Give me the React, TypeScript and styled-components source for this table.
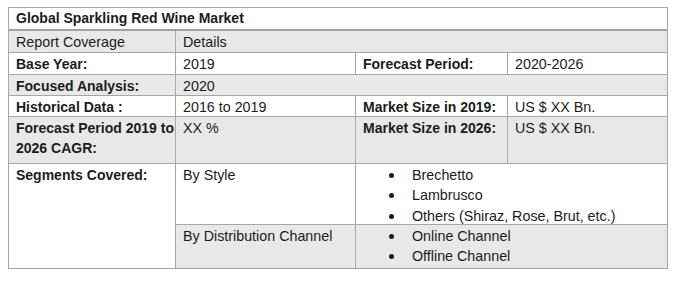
import React from "react";
import styled, { createGlobalStyle } from "styled-components";

const Global = createGlobalStyle`
  html, body { margin: 0; padding: 0; background: #ffffff; }
  body { font-family: "Liberation Sans", Arial, sans-serif; }
`;

const Page = styled.div`
  padding: 7px 0 0 8px;
`;

const Table = styled.div`
  width: 660px;
  box-sizing: border-box;
  border: 1px solid #a6a6a6;
  color: #1c1c1c;
  font-size: 14.3px;
`;

const Title = styled.div`
  height: 21px;
  line-height: 21px;
  padding: 0 7px;
  font-size: 14px;
  font-weight: bold;
  background: #ffffff;
  border-bottom: 2px solid #a0a0a0;
`;

const Grid = styled.div`
  display: grid;
  grid-template-columns: 166px 179px 151px 159px;
  grid-template-rows: 21px 21px 20px 20px 46px 60px 43px;
  gap: 1px;
  background: #a6a6a6;
`;

const Cell = styled.div<{ $grey?: boolean; $bold?: boolean; $span?: number; $rows?: number }>`
  background: ${(p) => (p.$grey ? "#e8e8e8" : "#ffffff")};
  font-weight: ${(p) => (p.$bold ? "bold" : "normal")};
  font-size: ${(p) => (p.$bold ? "14px" : "14.3px")};
  grid-column: span ${(p) => p.$span ?? 1};
  grid-row: span ${(p) => p.$rows ?? 1};
  padding: 0.5px 7px 0;
  line-height: 20.5px;
  white-space: nowrap;
`;

const Bullets = styled.ul`
  list-style: none;
  margin: 0;
  padding: 0 0 0 49px;
`;

const Bullet = styled.li`
  position: relative;
  line-height: 20.5px;
  &::before {
    content: "";
    position: absolute;
    left: -23px;
    top: 8px;
    width: 5px;
    height: 5px;
    border-radius: 50%;
    background: #1c1c1c;
  }
`;

export default function App() {
  return (
    <Page>
      <Global />
      <Table>
        <Title>Global Sparkling Red Wine Market</Title>
        <Grid>
          <Cell $grey>Report Coverage</Cell>
          <Cell $grey $span={3}>Details</Cell>

          <Cell $bold>Base Year:</Cell>
          <Cell>2019</Cell>
          <Cell $bold>Forecast Period:</Cell>
          <Cell>2020-2026</Cell>

          <Cell $grey $bold>Focused Analysis:</Cell>
          <Cell $grey $span={3}>2020</Cell>

          <Cell $bold>Historical Data :</Cell>
          <Cell>2016 to 2019</Cell>
          <Cell $bold>Market Size in 2019:</Cell>
          <Cell>US $ XX Bn.</Cell>

          <Cell $grey $bold>
            Forecast Period 2019 to
            <br />
            2026 CAGR:
          </Cell>
          <Cell $grey>XX %</Cell>
          <Cell $grey $bold>Market Size in 2026:</Cell>
          <Cell $grey>US $ XX Bn.</Cell>

          <Cell $bold $rows={2}>Segments Covered:</Cell>
          <Cell>By Style</Cell>
          <Cell $span={2}>
            <Bullets>
              <Bullet>Brechetto</Bullet>
              <Bullet>Lambrusco</Bullet>
              <Bullet>Others (Shiraz, Rose, Brut, etc.)</Bullet>
            </Bullets>
          </Cell>

          <Cell $grey>By Distribution Channel</Cell>
          <Cell $grey $span={2}>
            <Bullets>
              <Bullet>Online Channel</Bullet>
              <Bullet>Offline Channel</Bullet>
            </Bullets>
          </Cell>
        </Grid>
      </Table>
    </Page>
  );
}
